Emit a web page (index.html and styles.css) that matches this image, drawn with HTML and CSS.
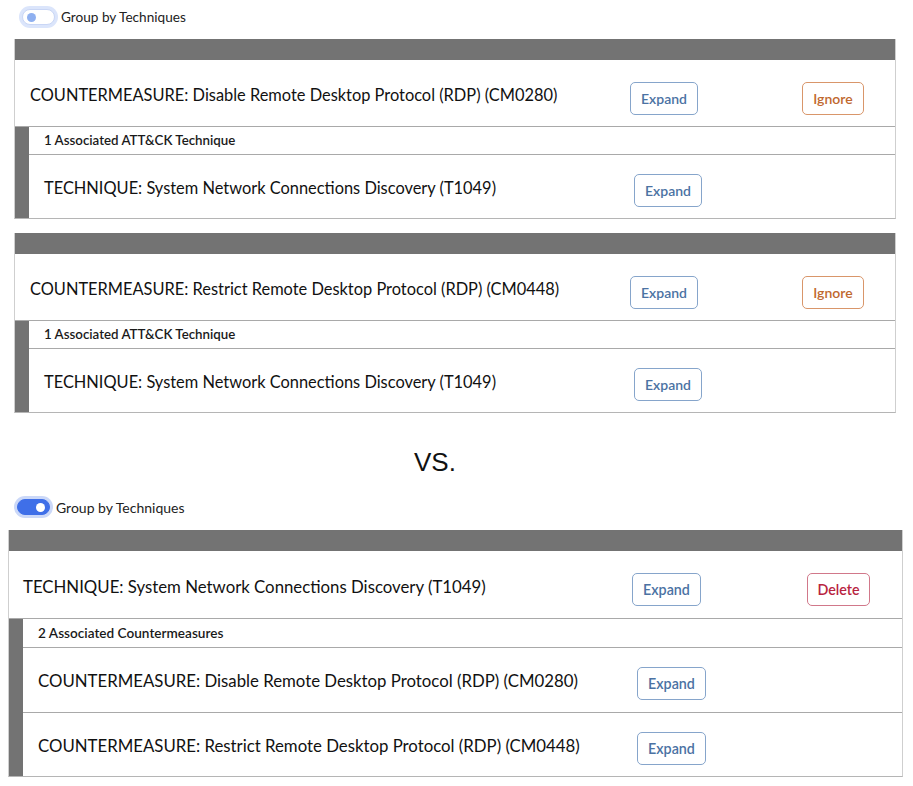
FILE: index.html
```html
<!DOCTYPE html>
<html>
<head>
<meta charset="utf-8">
<link rel="stylesheet" href="styles.css">
</head>
<body>
<section class="panel panel-top">
  <div class="toggle-row">
    <span class="toggle off"><span class="knob"></span></span>
    <span class="toggle-label">Group by Techniques</span>
  </div>

  <div class="card">
    <div class="card-head"></div>
    <div class="main-row">
      <div class="title">COUNTERMEASURE: Disable Remote Desktop Protocol (RDP) (CM0280)</div>
      <button class="btn btn-expand">Expand</button>
      <button class="btn btn-ignore">Ignore</button>
    </div>
    <div class="sub">
      <div class="stripe"></div>
      <div class="sub-body">
        <div class="assoc">1 Associated ATT&amp;CK Technique</div>
        <div class="sub-row">
          <div class="title">TECHNIQUE: System Network Connections Discovery (T1049)</div>
          <button class="btn btn-expand">Expand</button>
        </div>
      </div>
    </div>
  </div>

  <div class="card">
    <div class="card-head"></div>
    <div class="main-row">
      <div class="title">COUNTERMEASURE: Restrict Remote Desktop Protocol (RDP) (CM0448)</div>
      <button class="btn btn-expand">Expand</button>
      <button class="btn btn-ignore">Ignore</button>
    </div>
    <div class="sub">
      <div class="stripe"></div>
      <div class="sub-body">
        <div class="assoc">1 Associated ATT&amp;CK Technique</div>
        <div class="sub-row">
          <div class="title">TECHNIQUE: System Network Connections Discovery (T1049)</div>
          <button class="btn btn-expand">Expand</button>
        </div>
      </div>
    </div>
  </div>
</section>

<div class="vs">VS.</div>

<section class="panel panel-bottom">
  <div class="toggle-row">
    <span class="toggle on"><span class="knob"></span></span>
    <span class="toggle-label">Group by Techniques</span>
  </div>

  <div class="card">
    <div class="card-head"></div>
    <div class="main-row">
      <div class="title">TECHNIQUE: System Network Connections Discovery (T1049)</div>
      <button class="btn btn-expand">Expand</button>
      <button class="btn btn-delete">Delete</button>
    </div>
    <div class="sub">
      <div class="stripe"></div>
      <div class="sub-body">
        <div class="assoc">2 Associated Countermeasures</div>
        <div class="sub-row">
          <div class="title">COUNTERMEASURE: Disable Remote Desktop Protocol (RDP) (CM0280)</div>
          <button class="btn btn-expand">Expand</button>
        </div>
        <div class="sub-row">
          <div class="title">COUNTERMEASURE: Restrict Remote Desktop Protocol (RDP) (CM0448)</div>
          <button class="btn btn-expand">Expand</button>
        </div>
      </div>
    </div>
  </div>
</section>
</body>
</html>
```

FILE: styles.css
```css
* { box-sizing: border-box; }
html, body { margin: 0; padding: 0; background: #fff; }
body {
  font-family: Lato, "Open Sans", sans-serif;
  color: #1a1a1a;
  width: 913px;
  height: 786px;
  overflow: hidden;
}

.panel-top { padding: 8px 17px 0 14px; }
.panel-bottom { padding: 0 10px 0 8px; }

.toggle-row {
  display: flex;
  align-items: center;
  height: 18px;
  gap: 6px;
}
.panel-top .toggle-row { margin-left: 8px; margin-bottom: 13px; }
.panel-bottom .toggle-row { margin-left: 9px; margin-bottom: 14px; }

.toggle {
  position: relative;
  width: 33px;
  height: 16px;
  border-radius: 9px;
  display: inline-block;
  flex: none;
}
.toggle.off {
  background: #fff;
  border: 1px solid #c9d6f5;
  box-shadow: 0 0 0 3px #dbe5fb;
}
.toggle.on {
  background: #3f6fe8;
  border: 1px solid #3f6fe8;
  box-shadow: 0 0 0 3px #cbd8f8;
}
.knob {
  position: absolute;
  top: 3px;
  width: 9px;
  height: 9px;
  border-radius: 50%;
}
.toggle.off .knob { left: 4px; background: #8fb0f0; }
.toggle.on .knob { right: 4px; background: #fff; }

.toggle-label {
  font-size: 13.6px;
  color: #222;
}
.panel-bottom .toggle-label { font-size: 14px; }

.card {
  border-left: 1px solid #cfcfcf;
  border-right: 1px solid #cfcfcf;
  border-bottom: 1px solid #b5b5b5;
  margin-bottom: 14px;
}
.card-head {
  height: 21px;
  background: #737373;
}
.main-row {
  display: flex;
  align-items: center;
  height: 67px;
  padding-left: 15px;
  border-bottom: 1px solid #a9a9a9;
}
.panel-top .main-row .title { flex: 0 0 600px; }
.panel-bottom .main-row { height: 68px; padding-left: 14px; }
.panel-bottom .main-row .title { flex: 0 0 609px; }

.title {
  font-size: 16.4px;
  color: #111;
  white-space: nowrap;
  padding-top: 3px;
}
.panel-bottom .title { font-size: 16.8px; }

.sub { display: flex; }
.stripe { width: 14px; background: #737373; flex: none; }
.sub-body { flex: 1; }
.assoc {
  height: 28px;
  line-height: 27px;
  padding-left: 15px;
  font-size: 13.3px;
  font-weight: 600;
  color: #1a1a1a;
  border-bottom: 1px solid #a9a9a9;
}
.panel-bottom .assoc { height: 29px; line-height: 28px; font-size: 13.6px; }

.sub-row {
  display: flex;
  align-items: center;
  height: 63px;
  padding-left: 15px;
}
.sub-row + .sub-row { border-top: 1px solid #a9a9a9; }
.sub-row .title { padding-top: 1px; }
.panel-top .sub-row .title { flex: 0 0 590px; }
.panel-bottom .sub-row { height: 64px; }
.panel-bottom .sub-row .title { flex: 0 0 599px; }

.btn {
  font-family: inherit;
  font-size: 14px;
  font-weight: 600;
  background: #fff;
  border-radius: 5px;
  height: 33px;
  padding: 0;
  margin-top: 10px;
  cursor: pointer;
}
.sub-row .btn { margin-top: 7px; }
.btn-expand {
  width: 68px;
  color: #4b72a3;
  border: 1px solid #86a5cb;
}
.btn-ignore {
  width: 62px;
  margin-left: 104px;
  color: #c0682e;
  border: 1px solid #d9966a;
}
.btn-delete {
  width: 63px;
  margin-left: 106px;
  color: #b82440;
  border: 1px solid #d1788a;
}
.panel-bottom .btn-expand { width: 69px; }
.panel-bottom .btn { font-size: 14.3px; }

.vs {
  font-family: "Liberation Sans", Arial, sans-serif;
  font-size: 26px;
  margin: 34px 0 0 414px;
  height: 51px;
  line-height: 30px;
  color: #111;
}
```
